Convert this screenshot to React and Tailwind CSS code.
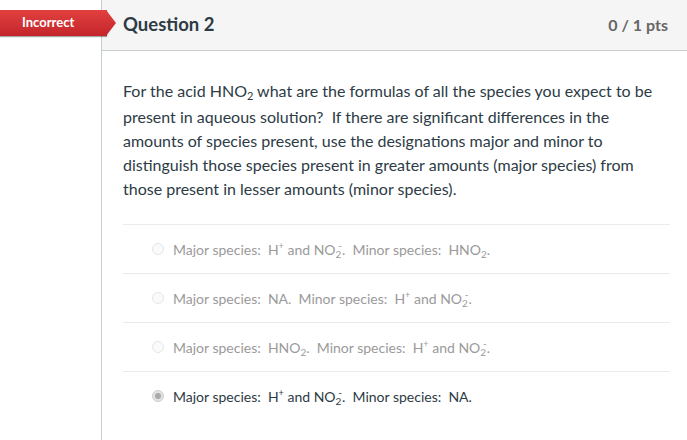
import React from "react";

const NO2minus = () => (
  <span>
    NO
    <span className="relative top-[3px] text-[10px]">2</span>
    <span className="relative top-[-6px] text-[10px] -ml-[3px]">-</span>
  </span>
);

const Hplus = () => (
  <span>
    H<span className="relative top-[-6px] text-[9px]">+</span>
  </span>
);

const HNO2 = () => (
  <span>
    HNO<span className="relative top-[3px] text-[10px]">2</span>
  </span>
);

const options = [
  {
    id: 1,
    content: (
      <>
        Major species:&nbsp; <Hplus /> and <NO2minus />.&nbsp; Minor species:&nbsp; <HNO2 />.
      </>
    ),
  },
  {
    id: 2,
    content: (
      <>
        Major species:&nbsp; NA.&nbsp; Minor species:&nbsp; <Hplus /> and <NO2minus />.
      </>
    ),
  },
  {
    id: 3,
    content: (
      <>
        Major species:&nbsp; <HNO2 />.&nbsp; Minor species:&nbsp; <Hplus /> and <NO2minus />.
      </>
    ),
  },
  {
    id: 4,
    selected: true,
    content: (
      <>
        Major species:&nbsp; <Hplus /> and <NO2minus />.&nbsp; Minor species:&nbsp; NA.
      </>
    ),
  },
];

const Radio = ({ checked }) =>
  checked ? (
    <span className="w-[12px] h-[12px] rounded-full bg-[#e2e2e2] border border-[#d0d0d0] flex items-center justify-center shrink-0">
      <span className="w-[6px] h-[6px] rounded-full bg-[#a9a9a9]" />
    </span>
  ) : (
    <span className="w-[12px] h-[12px] rounded-full border border-[#e6e6e6] bg-[#fafafa] shrink-0" />
  );

const App = () => {
  return (
    <div
      className="w-[687px] h-[440px] flex bg-white overflow-hidden"
      style={{ fontFamily: "Lato, 'Open Sans', sans-serif" }}
    >
      <div className="w-[101px] relative shrink-0">
        {/* badge */}
        <div className="absolute left-0 top-[10px] z-10 flex">
          <div className="w-[107px] h-[26px] bg-gradient-to-b from-[#e2403f] to-[#c3252b] shadow-[0_1px_1px_rgba(0,0,0,0.35)] flex items-center pl-[22px] text-white font-bold text-[13px]">
            Incorrect
          </div>
          <svg width="10" height="26" viewBox="0 0 10 26" className="-ml-px">
            <defs>
              <linearGradient id="bg" x1="0" y1="0" x2="0" y2="1">
                <stop offset="0" stopColor="#e2403f" />
                <stop offset="1" stopColor="#c3252b" />
              </linearGradient>
            </defs>
            <polygon points="0,0 10,13 0,26" fill="url(#bg)" />
          </svg>
        </div>
      </div>
      <div className="flex-1 border-l border-[#c7cdd1] flex flex-col">
        <div className="h-[51px] bg-[#f5f5f5] border-b border-[#c7cdd1] flex items-center justify-between pl-[21px] pr-[19px] shrink-0">
          <h2 className="text-[18.5px] font-bold text-[#2d3b45]">Question 2</h2>
          <span className="text-[16px] font-bold text-[#666]">0 / 1 pts</span>
        </div>
        <div className="pl-[21px] pr-[17px] pt-[28px]">
          <p className="text-[16px] leading-[24px] text-[#2d3b45] pr-[10px]">
            For the acid HNO<span className="relative top-[3px] text-[11px]">2</span> what are the formulas of all the species you expect to be present in aqueous solution?&nbsp; If there are significant differences in the amounts of species present, use the designations major and minor to distinguish those species present in greater amounts (major species) from those present in lesser amounts (minor species).
          </p>
          <div className="mt-[23px]">
            {options.map((o) => (
              <div
                key={o.id}
                className="h-[49px] border-t border-[#ebebeb] flex items-center gap-[9px] pl-[29px]"
              >
                <Radio checked={o.selected} />
                <span
                  className={
                    o.selected
                      ? "text-[14px] text-[#2d3b45]"
                      : "text-[14px] text-[#9a9a9a]"
                  }
                >
                  {o.content}
                </span>
              </div>
            ))}
          </div>
        </div>
      </div>
    </div>
  );
};

export default App;
